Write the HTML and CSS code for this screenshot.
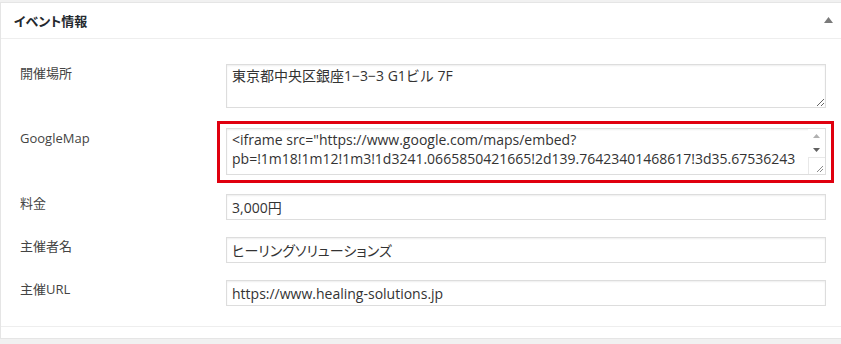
FILE: index.html
```html
<!DOCTYPE html>
<html lang="ja">
<head>
<meta charset="utf-8">
<title>イベント情報</title>
<link rel="stylesheet" href="styles.css">
</head>
<body>
<div class="postbox">
  <div class="postbox-header">
    <h2 class="postbox-title">イベント情報</h2>
    <svg class="toggle" width="9" height="6" viewBox="0 0 9 6"><polygon points="4.5,0 9,6 0,6" fill="#7a7a7a"/></svg>
  </div>
  <div class="inside">
    <div class="row">
      <label class="row-label">開催場所</label>
      <div class="field">
        <textarea class="area area-place">東京都中央区銀座1−3−3 G1ビル 7F</textarea>
      </div>
    </div>
    <div class="row row-map">
      <label class="row-label row-label-map">GoogleMap</label>
      <div class="field">
        <div class="highlight">
          <div class="area-wrap">
            <textarea class="area area-map">&lt;iframe src="https://www.google.com/maps/embed?
pb=!1m18!1m12!1m3!1d3241.0665850421665!2d139.76423401468617!3d35.67536243</textarea>
            <div class="fake-scroll">
              <span class="sb-btn"><svg width="7" height="4" viewBox="0 0 7 4"><polygon points="3.5,0 7,4 0,4" fill="#b0b0b0"/></svg></span>
              <span class="sb-btn"><svg width="7" height="4" viewBox="0 0 7 4"><polygon points="0,0 7,0 3.5,4" fill="#606060"/></svg></span>
              <span class="sb-corner"><svg width="9" height="9" viewBox="0 0 9 9"><path d="M8 2 L2 8 M8 5 L5 8" stroke="#8a8a8a" stroke-width="1"/></svg></span>
            </div>
          </div>
        </div>
      </div>
    </div>
    <div class="row row-gap-s">
      <label class="row-label">料金</label>
      <div class="field"><input class="text" type="text" value="3,000円"></div>
    </div>
    <div class="row row-gap-l">
      <label class="row-label">主催者名</label>
      <div class="field"><input class="text text-kana" type="text" value="ヒーリングソリューションズ"></div>
    </div>
    <div class="row row-gap-l">
      <label class="row-label">主催URL</label>
      <div class="field"><input class="text" type="text" value="https://www.healing-solutions.jp"></div>
    </div>
  </div>
  <div class="postbox-foot"></div>
</div>
</body>
</html>
```
FILE: styles.css
```css
html, body {
  margin: 0;
  padding: 0;
}
body {
  background: #f1f1f1;
  padding-top: 2px;
  font-family: "Open Sans", "Noto Sans CJK JP", sans-serif;
  color: #444;
}
.postbox {
  background: #fff;
  border: 1px solid #e5e5e5;
  border-right: none;
  box-shadow: 0 1px 1px rgba(0,0,0,0.04);
}
.postbox-header {
  height: 35px;
  border-bottom: 1px solid #eeeeee;
  display: flex;
  align-items: center;
  justify-content: space-between;
  padding: 0 8px 0 13px;
}
.postbox-title {
  margin: 0;
  font-size: 13px;
  font-weight: 700;
  color: #23282d;
  line-height: 18px;
  font-feature-settings: "palt" 1;
}
.toggle {
  display: block;
  margin-top: -1px;
}
.inside {
  padding: 25px 0 20px 19px;
  border-bottom: 1px solid #eeeeee;
  display: flex;
  flex-direction: column;
}
.row {
  display: flex;
  align-items: flex-start;
}
.row-map { margin-top: 13px; }
.row-gap-s { margin-top: 11px; }
.row-gap-l { margin-top: 17px; }
.row-label {
  flex: 0 0 206px;
  font-size: 13px;
  line-height: 18px;
  color: #444;
}
.row-label-map {
  padding-top: 8px;
}
.field {
  flex: 0 0 600px;
}
.area, .text {
  box-sizing: border-box;
  width: 600px;
  display: block;
  margin: 0;
  border: 1px solid #dddddd;
  box-shadow: inset 0 1px 2px rgba(0,0,0,0.07);
  font-family: "Open Sans", "Noto Sans CJK JP", sans-serif;
  font-size: 14px;
  color: #333;
  background: #fff;
  outline: none;
}
.area {
  padding: 1px 5px;
  line-height: 19px;
}
.area-place {
  height: 44px;
  resize: vertical;
}
.highlight {
  margin: 0 -8px 0 -9px;
  border: 3px solid #e0000f;
  padding: 4px 5px 5px 6px;
}
.area-wrap {
  position: relative;
}
.area-map {
  height: 47px;
  white-space: pre;
  overflow: hidden;
  resize: none;
  padding-right: 22px;
}
.fake-scroll {
  position: absolute;
  top: 1px;
  right: 1px;
  width: 17px;
  height: 45px;
  display: flex;
  flex-direction: column;
  background: #fff;
}
.sb-btn {
  height: 14px;
  display: flex;
  align-items: center;
  justify-content: center;
}
.sb-corner {
  margin-top: auto;
  height: 17px;
  border-left: 1px solid #e8e8e8;
  border-top: 1px solid #e8e8e8;
  box-sizing: border-box;
  display: flex;
  align-items: flex-end;
  justify-content: flex-end;
}
.sb-corner svg {
  display: block;
  margin: 0 1px 1px 0;
}
.text {
  height: 26px;
  padding: 0 5px;
  line-height: 24px;
}
.text-kana {
  font-feature-settings: "palt" 1;
}
.postbox-foot {
  height: 11px;
}
```
